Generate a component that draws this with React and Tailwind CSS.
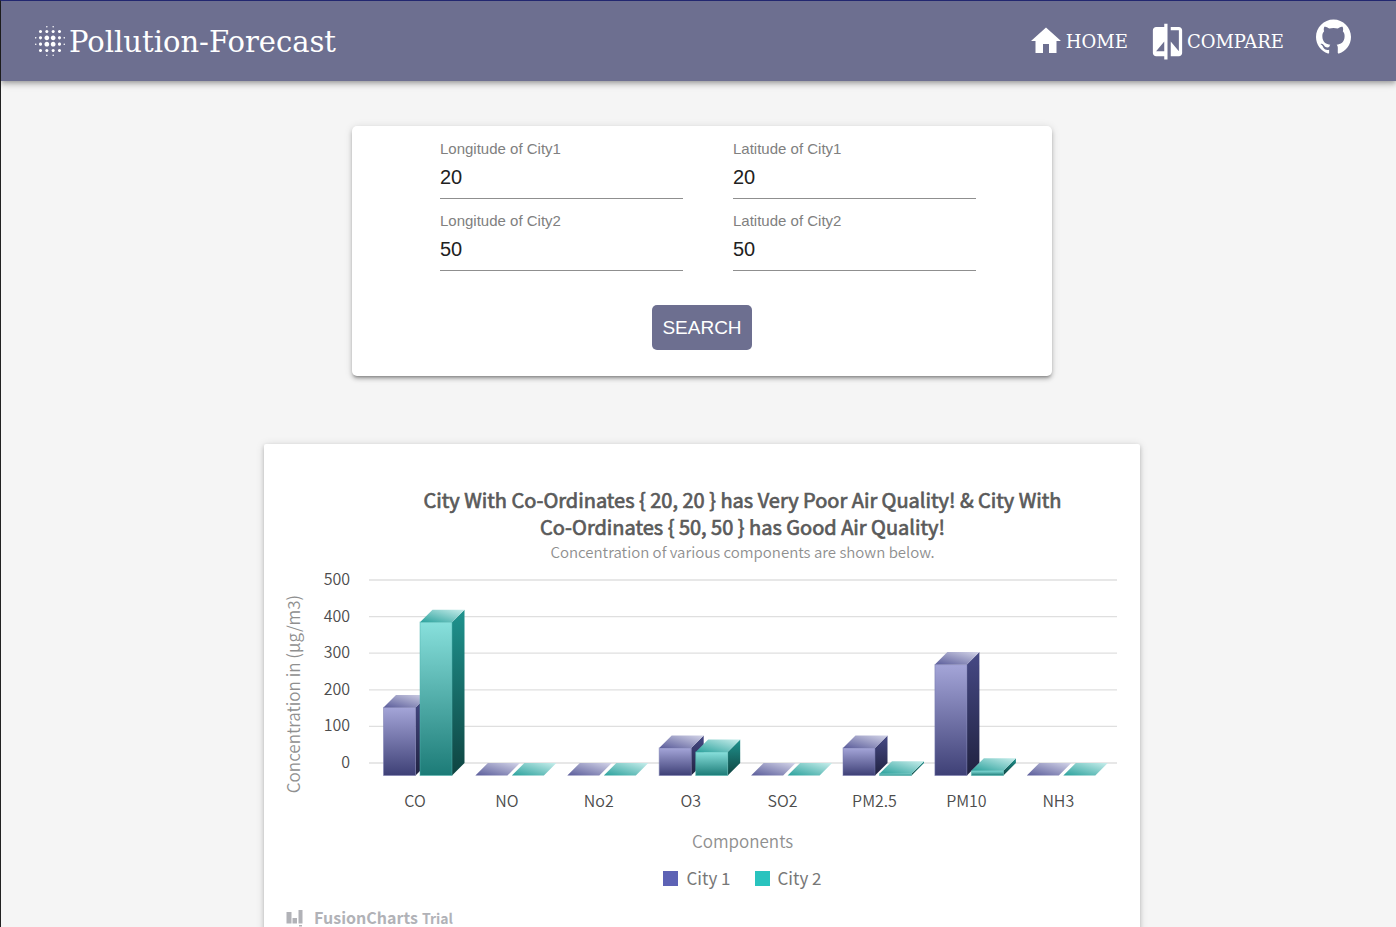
import { MdBlurOn, MdHome, MdCompare } from "react-icons/md";
import { SiGithub } from "react-icons/si";

const components = [
  { name: "CO", city1: 186, city2: 419 },
  { name: "NO", city1: 0, city2: 0 },
  { name: "No2", city1: 0, city2: 0 },
  { name: "O3", city1: 75, city2: 64 },
  { name: "SO2", city1: 0, city2: 0 },
  { name: "PM2.5", city1: 75, city2: 5 },
  { name: "PM10", city1: 303, city2: 13 },
  { name: "NH3", city1: 0, city2: 0 },
];

const ticks = [500, 400, 300, 200, 100, 0];
const DEPTH = 12.5;
const ZERO = 198;
const SCALE = 0.366;
const FIRST = 151;
const PITCH = 91.9;

const palette = {
  city1: { front: ["#a4a5d8", "#3e4076"], side: ["#464985", "#202240"], top: ["#5a5c9a", "#d3d4e8"], edge: "#7577ad" },
  city2: { front: ["#88e0dc", "#1c7b77"], side: ["#1f938e", "#0f4441"], top: ["#2aa19c", "#c8eeec"], edge: "#4fb5b0" },
};

function Bar({ x, value, city }) {
  const width = 32;
  const base = ZERO + DEPTH;
  const top = base - value * SCALE;
  const right = x + width;
  return (
    <g>
      {value > 0 && (
        <>
          <polygon
            fill={`url(#${city}-side)`}
            points={`${right},${top} ${right + DEPTH},${top - DEPTH} ${right + DEPTH},${base - DEPTH} ${right},${base}`}
          />
          <rect x={x} y={top} width={width} height={base - top} fill={`url(#${city}-front)`} stroke={palette[city].edge} strokeOpacity="0.5" />
        </>
      )}
      <polygon
        fill={`url(#${city}-top)`}
        points={`${x},${top} ${x + DEPTH},${top - DEPTH} ${right + DEPTH},${top - DEPTH} ${right},${top}`}
      />
    </g>
  );
}

function Plot() {
  return (
    <svg viewBox="0 0 876 255" className="block w-full" role="img" aria-label="Concentration of components by city">
      <defs>
        {Object.entries(palette).map(([city, shades]) => (
          <g key={city}>
            <linearGradient id={`${city}-front`} x1="0" y1="0" x2="0" y2="1">
              <stop offset="0" stopColor={shades.front[0]} />
              <stop offset="1" stopColor={shades.front[1]} />
            </linearGradient>
            <linearGradient id={`${city}-side`} x1="0" y1="0" x2="0" y2="1">
              <stop offset="0" stopColor={shades.side[0]} />
              <stop offset="1" stopColor={shades.side[1]} />
            </linearGradient>
            <linearGradient id={`${city}-top`} x1="0" y1="1" x2="1" y2="0">
              <stop offset="0" stopColor={shades.top[0]} />
              <stop offset="1" stopColor={shades.top[1]} />
            </linearGradient>
          </g>
        ))}
      </defs>
      {ticks.map((tick) => (
        <g key={tick}>
          <line x1="105" x2="853" y1={ZERO - tick * SCALE} y2={ZERO - tick * SCALE} stroke="#dfdfdf" strokeWidth="1.3" />
          <text x="86" y={ZERO - tick * SCALE + 5} textAnchor="end" fontSize="16" fontWeight="350" fill="#4c4c4c">
            {tick}
          </text>
        </g>
      ))}
      <text transform="translate(36 129) rotate(-90)" textAnchor="middle" fontSize="17" fontWeight="350" fill="#8f8f8f">
        Concentration in (µg/m3)
      </text>
      {components.map((item, index) => {
        const center = FIRST + index * PITCH;
        return (
          <g key={item.name}>
            <Bar x={center - 31.5} value={item.city1} city="city1" />
            <Bar x={center + 5} value={item.city2} city="city2" />
            <text x={center} y="242" textAnchor="middle" fontSize="16" fontWeight="350" fill="#4c4c4c">
              {item.name}
            </text>
          </g>
        );
      })}
    </svg>
  );
}

function Field({ id, label, value }) {
  return (
    <div className="flex flex-col">
      <label htmlFor={id} className="text-[15px] leading-[18px] text-[#808080]">
        {label}
      </label>
      <input
        id={id}
        type="text"
        defaultValue={value}
        className="h-[41px] w-full border-b border-[#8f8f8f] bg-transparent pb-0.5 text-xl text-[#212121] outline-none"
      />
    </div>
  );
}

function Header() {
  return (
    <header className="flex h-20 items-center justify-between bg-[#6d6f90] pr-[45px] pl-[30px] font-['DejaVu_Serif',serif] text-white shadow-[0_2px_4px_-1px_rgba(0,0,0,0.2),0_4px_5px_rgba(0,0,0,0.14),0_1px_10px_rgba(0,0,0,0.12)]">
      <a href="#" className="flex items-center">
        <MdBlurOn className="size-[38px]" />
        <span className="pt-0.5 text-[29px] leading-10">Pollution-Forecast</span>
      </a>
      <nav className="flex items-center text-lg">
        <a href="#home" className="flex items-center gap-0.5">
          <MdHome className="size-9" />
          <span className="pt-0.5">HOME</span>
        </a>
        <a href="#compare" className="ml-5 flex items-center">
          <MdCompare className="size-[39px]" />
          <span className="pt-0.5">COMPARE</span>
        </a>
        <a href="#github" aria-label="GitHub" className="ml-8 pb-2.5">
          <SiGithub className="size-[35px]" />
        </a>
      </nav>
    </header>
  );
}

export default function App() {
  return (
    <div className="min-h-screen border-t border-l border-t-[#262c78] border-l-[#222222] bg-[#f5f5f5] font-['Liberation_Sans',Arial,sans-serif]">
      <Header />
      <main className="flex flex-col items-center pl-[7px]">
        <form
          onSubmit={(event) => event.preventDefault()}
          className="mt-[45px] flex w-full max-w-[700px] flex-col items-center rounded-[5px] bg-white pt-3.5 pb-[26px] shadow-[0_3px_3px_-2px_rgba(0,0,0,0.3),0_3px_4px_rgba(0,0,0,0.2),0_1px_8px_rgba(0,0,0,0.12)]"
        >
          <div className="grid w-full grid-cols-2 gap-x-[50px] gap-y-[13px] pr-[76px] pl-[88px]">
            <Field id="lon1" label="Longitude of City1" value="20" />
            <Field id="lat1" label="Latitude of City1" value="20" />
            <Field id="lon2" label="Longitude of City2" value="50" />
            <Field id="lat2" label="Latitude of City2" value="50" />
          </div>
          <button type="submit" className="mt-[34px] h-[45px] rounded-[5px] bg-[#6d6f90] px-2.5 pt-0.5 text-[19px] text-white">
            SEARCH
          </button>
        </form>

        <section className="mt-[68px] w-full max-w-[876px] rounded-xs bg-white pt-[42px] pb-4 font-['Noto_Sans_CJK_SC',sans-serif] shadow-[0_2px_4px_rgba(0,0,0,0.2),0_1px_10px_rgba(0,0,0,0.12)]">
          <div className="pr-[23px] pl-[104px] text-center">
            <h2 className="text-xl leading-[27px] font-normal text-[#5a5a5a] [-webkit-text-stroke:0.7px_#5a5a5a]">
              City With Co-Ordinates &#123; 20, 20 &#125; has Very Poor Air Quality! &amp; City With
              <br />
              Co-Ordinates &#123; 50, 50 &#125; has Good Air Quality!
            </h2>
            <p className="pb-0.5 text-[15px] leading-[23px] font-[350] text-[#8f8f8f]">Concentration of various components are shown below.</p>
          </div>
          <Plot />
          <div className="pr-[23px] pl-[104px] text-center">
            <p className="pt-[9px] text-[17px] leading-6 font-[350] text-[#8f8f8f]">Components</p>
            <ul className="flex justify-center gap-6 pt-[13px] text-[17px] leading-6 text-[#777777]">
              <li className="flex items-center gap-2">
                <span className="size-[15px] bg-[#5d62b5]" />
                City 1
              </li>
              <li className="flex items-center gap-2">
                <span className="size-[15px] bg-[#29c3be]" />
                City 2
              </li>
            </ul>
          </div>
          <a href="#fusioncharts" className="ml-[22px] flex items-baseline pt-[15px] text-base leading-6 font-bold text-[#b1b2b7]">
            <svg viewBox="0 0 17 20" className="mr-[11px] h-5 w-[17px] self-center" fill="currentColor" aria-hidden="true">
              <rect x="0.5" y="5" width="5" height="11.5" />
              <rect x="6.5" y="11" width="4.5" height="5.5" />
              <rect x="12.5" y="3" width="4" height="13.5" />
              <rect x="13" y="18" width="3" height="1.5" />
            </svg>
            FusionCharts
            <span className="ml-1 text-sm font-bold">Trial</span>
          </a>
        </section>
      </main>
    </div>
  );
}
